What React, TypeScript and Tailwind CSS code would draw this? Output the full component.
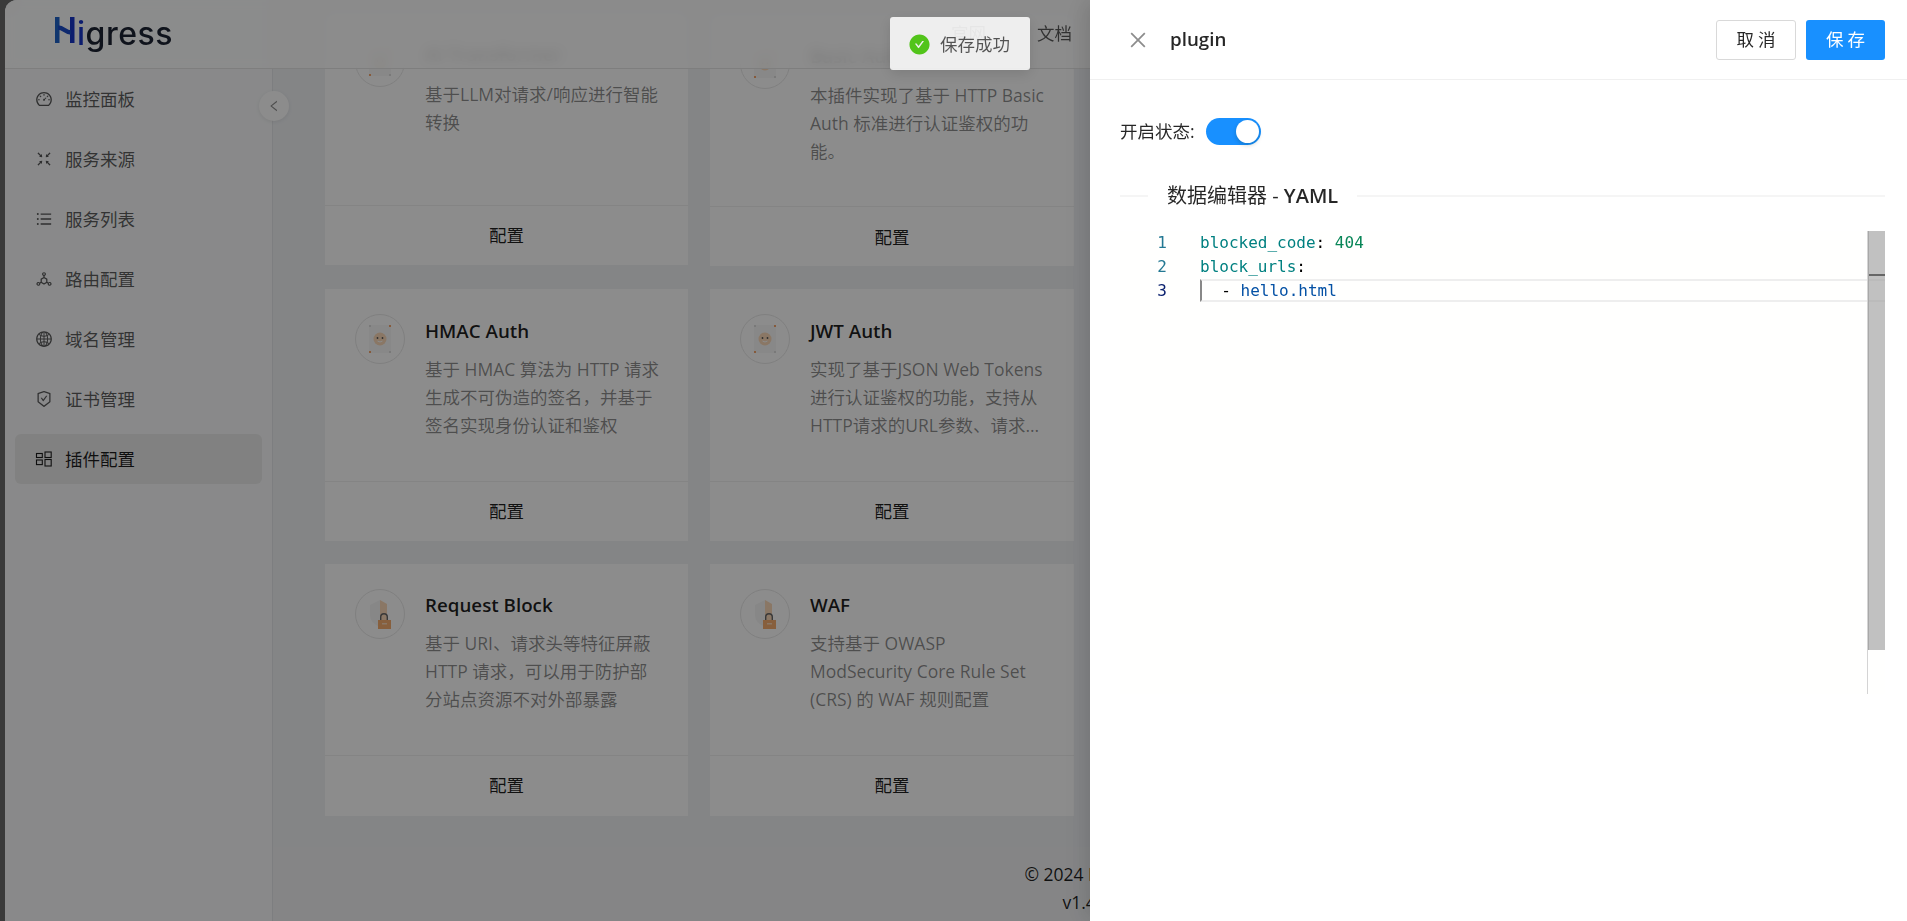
import React from "react";
import {
  AiOutlineDashboard,
  AiOutlineFullscreenExit,
  AiOutlineUnorderedList,
  AiOutlineDeploymentUnit,
  AiOutlineGlobal,
  AiOutlineSafetyCertificate,
  AiOutlineClose,
  AiOutlineLeft,
  AiFillCheckCircle,
} from "react-icons/ai";

const PluginsIcon = () => (
  <svg width="18" height="18" viewBox="0 0 18 18" fill="none" stroke="currentColor" strokeWidth="1.1">
    <rect x="1.5" y="3.5" width="5.8" height="4" />
    <rect x="1.5" y="10" width="5.8" height="4.6" />
    <rect x="10" y="2" width="6.2" height="5.5" />
    <rect x="10" y="9.5" width="6.2" height="6.5" />
  </svg>
);

const menu = [
  { label: "监控面板", icon: <AiOutlineDashboard size={18} /> },
  { label: "服务来源", icon: <AiOutlineFullscreenExit size={18} /> },
  { label: "服务列表", icon: <AiOutlineUnorderedList size={18} /> },
  { label: "路由配置", icon: <AiOutlineDeploymentUnit size={18} /> },
  { label: "域名管理", icon: <AiOutlineGlobal size={18} /> },
  { label: "证书管理", icon: <AiOutlineSafetyCertificate size={18} /> },
  { label: "插件配置", icon: <PluginsIcon />, active: true },
];

const FaceIcon = () => (
  <svg width="36" height="36" viewBox="0 0 36 36">
    <rect x="7" y="4" width="22" height="28" fill="#f8f8f8" />
    <circle cx="18" cy="18" r="6.5" fill="#fbd9b8" />
    <circle cx="15.5" cy="17" r="0.9" fill="#555" />
    <circle cx="20.5" cy="17" r="0.9" fill="#555" />
    <path d="M15.5 20q2.5 2 5 0" stroke="#fff" strokeWidth="1" fill="none" />
    <rect x="7" y="4" width="2" height="2" fill="#ddd" />
    <rect x="27" y="4" width="2" height="2" fill="#f4a46c" />
    <rect x="7" y="30" width="2" height="2" fill="#f4a46c" />
    <rect x="27" y="30" width="2" height="2" fill="#ddd" />
  </svg>
);

const LockIcon = () => (
  <svg width="36" height="36" viewBox="0 0 36 36">
    <path d="M18 4 L8 9 L8 19 Q8 27 18 31 Z" fill="#f6f6f6" />
    <path d="M18 4 L25 8 L25 32 L18 32 Z" fill="#fbd9b8" />
    <path d="M18 21 a4 4 0 0 1 8 0 v3 h-1.4 v-3 a2.6 2.6 0 0 0 -5.2 0 v3 h-1.4 z" fill="#666" />
    <rect x="16" y="24" width="13" height="9" fill="#f6ad6f" />
    <rect x="20" y="27" width="5" height="1.5" fill="#fbd9b8" />
  </svg>
);

type CardProps = {
  title: string;
  lines: string[];
  icon: React.ReactNode;
  className?: string;
  titleClass?: string;
  actionClass?: string;
};

const Card = ({
  title,
  lines,
  icon,
  className = "",
  titleClass = "mt-[3px] mb-[10.5px]",
  actionClass = "h-[60px]",
}: CardProps) => (
  <div className={"flex flex-col bg-white " + className}>
    <div className="flex flex-1 gap-[20px] pl-[30px] pt-[25px]">
      <div className="flex h-[50px] w-[50px] shrink-0 items-center justify-center rounded-full border border-[#e8e8e8]">
        {icon}
      </div>
      <div className="min-w-0">
        <div
          className={
            "h-[28px] text-[18.75px] font-semibold leading-[28px] text-[rgba(0,0,0,0.88)] " + titleClass
          }
        >
          {title}
        </div>
        <div className="text-[17.5px] leading-[28px] text-[rgba(0,0,0,0.45)]">
          {lines.map((l) => (
            <div key={l} className="whitespace-nowrap">
              {l}
            </div>
          ))}
        </div>
      </div>
    </div>
    <div
      className={
        "flex items-center justify-center border-t border-[#f0f0f0] text-[17.5px] text-[rgba(0,0,0,0.88)] " +
        actionClass
      }
    >
      配置
    </div>
  </div>
);

const App = () => (
  <div className="relative h-[921px] w-[1907px] overflow-hidden bg-[#6b6b6b] font-['Open_Sans','Noto_Sans_CJK_SC',sans-serif]">
    <div className="relative ml-[5px] flex h-full overflow-hidden rounded-tl-[12px] bg-[#f0f2f5]">
      <header className="absolute inset-x-0 top-0 z-10 flex h-[69px] items-center justify-between border-b border-[#e6e6e6] bg-white/85 pl-[50px] pr-[835px] backdrop-blur-[6px]">
        <div className="flex items-center">
          <svg width="20" height="27" viewBox="0 0 20 27" className="mb-[8px]">
            <rect x="0" y="0" width="4.5" height="26" fill="#1e63c9" />
            <rect x="15" y="0" width="4.5" height="26" fill="#1736c9" />
            <path d="M3 10.5 C9 10.5 10 15.5 16 15.5" stroke="#1a4cc9" strokeWidth="4.5" fill="none" />
          </svg>
          <span className="ml-[2px] font-['Inter',sans-serif] text-[32px] font-medium leading-none tracking-[0.5px] text-[#1d2433]">
            <span className="text-[#1736c9]">i</span>gress
          </span>
        </div>
        <nav className="mb-[2px] flex gap-[51px] text-[17.5px] text-[rgba(0,0,0,0.65)]">
          <span className="text-[rgba(0,0,0,0.4)]">官网</span>
          <span>文档</span>
        </nav>
      </header>

      <aside className="flex h-full w-[268px] shrink-0 flex-col gap-[10px] border-r border-[#e4e6e9] bg-[#f9fafb] pl-[10px] pr-[10px] pt-[74px]">
        {menu.map((m) => (
          <div
            key={m.label}
            className={
              "flex h-[50px] items-center gap-[12px] rounded-[6px] pl-[20px] text-[17.5px] " +
              (m.active ? "bg-[#ebebeb] text-[rgba(0,0,0,0.88)]" : "text-[rgba(0,0,0,0.65)]")
            }
          >
            {m.icon}
            <span>{m.label}</span>
          </div>
        ))}
      </aside>

      <div className="absolute left-[254px] top-[91px] z-20 flex h-[30px] w-[30px] items-center justify-center rounded-full bg-white text-[rgba(0,0,0,0.45)] shadow-[0_1px_4px_rgba(0,0,0,0.08)]">
        <AiOutlineLeft size={14} />
      </div>

      <main className="flex min-w-0 flex-1 flex-col">
        <div className="flex-1 pl-[52px] pt-[13.5px]">
          <div className="grid grid-cols-[363px_364px] gap-x-[22px] gap-y-[22.5px]">
            <Card
              className="-mt-[1.5px] h-[252.5px] self-start"
              titleClass="mt-[3px] mb-[11.5px]"
              title="AI Transformer"
              lines={["基于LLM对请求/响应进行智能", "转换"]}
              icon={<FaceIcon />}
            />
            <Card
              className="h-[252.5px]"
              titleClass="mt-[3px] mb-[11.5px]"
              actionClass="h-[60px] pt-[1px]"
              title="Basic Auth"
              lines={["本插件实现了基于 HTTP Basic", "Auth 标准进行认证鉴权的功", "能。"]}
              icon={<FaceIcon />}
            />
            <Card
              className="h-[252.5px]"
              title="HMAC Auth"
              lines={["基于 HMAC 算法为 HTTP 请求", "生成不可伪造的签名，并基于", "签名实现身份认证和鉴权"]}
              icon={<FaceIcon />}
            />
            <Card
              className="h-[252.5px]"
              title="JWT Auth"
              lines={["实现了基于JSON Web Tokens", "进行认证鉴权的功能，支持从", "HTTP请求的URL参数、请求..."]}
              icon={<FaceIcon />}
            />
            <Card
              className="h-[252.5px]"
              titleClass="mt-[2px] mb-[10px]"
              actionClass="h-[61px] pb-[1px]"
              title="Request Block"
              lines={["基于 URI、请求头等特征屏蔽", "HTTP 请求，可以用于防护部", "分站点资源不对外部暴露"]}
              icon={<LockIcon />}
            />
            <Card
              className="h-[252.5px]"
              titleClass="mt-[2px] mb-[10px]"
              actionClass="h-[61px] pb-[1px]"
              title="WAF"
              lines={["支持基于 OWASP", "ModSecurity Core Rule Set", "(CRS) 的 WAF 规则配置"]}
              icon={<LockIcon />}
            />
          </div>
        </div>
        <footer className="h-[74px] bg-[#f2f3f5] pr-[7px] pt-[13px] text-center text-[17.5px] leading-[28px] text-[rgba(0,0,0,0.88)]">
          <div>© 2024 Higress</div>
          <div>v1.4.2</div>
        </footer>
      </main>
    </div>

    <div className="absolute inset-0 z-30 bg-black/45" />

    <div className="absolute left-[890px] top-[17px] z-40 flex h-[53px] w-[140px] items-center gap-[9px] rounded-[3px] bg-white/85 pl-[18px] pt-[1px] text-[17.5px] text-[rgba(0,0,0,0.65)] shadow-[0_4px_14px_rgba(0,0,0,0.12)]">
      <AiFillCheckCircle size={23} className="text-[#52c41a]" />
      <span>保存成功</span>
    </div>

    <aside className="absolute bottom-0 right-0 top-0 z-40 flex w-[817px] flex-col bg-white shadow-[-6px_0_16px_rgba(0,0,0,0.08),-9px_0_28px_rgba(0,0,0,0.05)]">
      <div className="flex h-[80px] shrink-0 items-center border-b border-[#f0f0f0] pl-[37px] pr-[22px]">
        <AiOutlineClose size={22} className="text-[rgba(0,0,0,0.45)]" />
        <span className="ml-[21px] flex-1 text-[18.75px] font-semibold text-[rgba(0,0,0,0.85)]">plugin</span>
        <button className="h-[40px] w-[80px] rounded-[3px] border border-[#d9d9d9] bg-white pl-[4px] text-[17.5px] tracking-[4px] text-[rgba(0,0,0,0.85)]">
          取消
        </button>
        <button className="ml-[10px] h-[40px] w-[79px] rounded-[3px] bg-[#1890ff] pl-[4px] text-[17.5px] tracking-[4px] text-white">
          保存
        </button>
      </div>
      <div className="flex-1 pl-[30px] pr-[22px]">
        <div className="mt-[38px] flex h-[27px] items-center">
          <span className="text-[17.5px] text-[rgba(0,0,0,0.85)]">开启状态:</span>
          <span className="ml-[11px] flex h-[27px] w-[55px] items-center justify-end rounded-full bg-[#1890ff] pr-[2px]">
            <span className="h-[23px] w-[23px] rounded-full bg-white shadow-[0_2px_4px_rgba(0,35,11,0.2)]" />
          </span>
        </div>
        <div className="mt-[36px] flex h-[30px] items-center">
          <span className="h-[2px] w-[28px] bg-[#f5f5f5]" />
          <span className="px-[19px] text-[20px] leading-[30px] text-[rgba(0,0,0,0.85)]">
            数据编辑器 - <span className="font-semibold">YAML</span>
          </span>
          <span className="h-[2px] flex-1 bg-[#f5f5f5]" />
        </div>
        <div className="relative mt-[20px] h-[463px] overflow-hidden bg-[#fffffe] font-['DejaVu_Sans_Mono',monospace] text-[16px] leading-[24px]">
          <div className="flex h-[24px]">
            <span className="w-[47px] text-right text-[#237893]">1</span>
            <span className="ml-[33px] whitespace-pre">
              <span className="text-[#008080]">blocked_code</span>
              <span className="text-black">: </span>
              <span className="text-[#098658]">404</span>
            </span>
          </div>
          <div className="flex h-[24px]">
            <span className="w-[47px] text-right text-[#237893]">2</span>
            <span className="ml-[33px] whitespace-pre">
              <span className="text-[#008080]">block_urls</span>
              <span className="text-black">:</span>
            </span>
          </div>
          <div className="flex h-[24px]">
            <span className="w-[47px] text-right text-[#0b216f]">3</span>
            <span className="ml-[33px] h-[23px] flex-1 whitespace-pre border-y-2 border-l-2 border-y-[#eeeeee] border-l-[#888888] leading-[19px]">
              <span className="text-black">{"  - "}</span>
              <span className="text-[#0451a5]">hello.html</span>
            </span>
          </div>
          <div className="absolute bottom-0 right-[17px] top-0 w-px bg-[#d4d4d4]" />
          <div className="absolute right-0 top-0 h-[419px] w-[17px] border-l border-[#a8a8a8] bg-[#a0a0a0]/65">
            <div className="mt-[43px] h-[2px] w-full bg-[#666666]" />
          </div>
        </div>
      </div>
    </aside>
  </div>
);

export default App;
